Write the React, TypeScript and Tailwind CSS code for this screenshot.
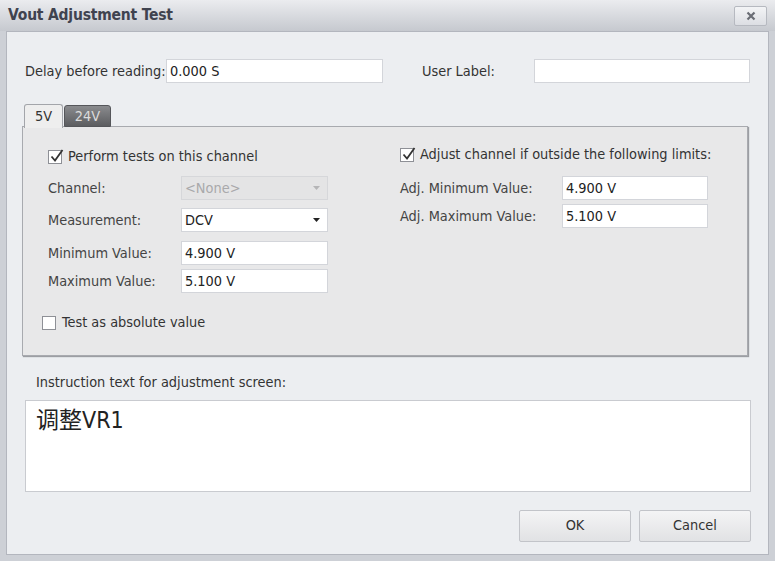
import React from 'react'

const font = { fontFamily: '"DejaVu Sans Condensed", "DejaVu Sans", "Noto Sans CJK SC", sans-serif' }

const inputClass = 'h-[24px] bg-white border border-[#d3d5da] px-[3px] flex items-center text-[14.4px] leading-[17px] text-[#222]'

function Check({ checked }: { checked?: boolean }) {
  return (
    <span className="relative w-[14px] h-[14px] bg-white border border-[#8e9096] shrink-0 inline-block">
      {checked && (
        <svg width="16" height="16" viewBox="0 0 16 16" className="absolute -top-[3px] left-[0px]">
          <path d="M2.5 8.5 L6 12.5 L13.5 2" fill="none" stroke="#333" strokeWidth="1.8" />
        </svg>
      )}
    </span>
  )
}

function Row({ label, children, labelW = 'w-[133px]' }: { label: string; children: React.ReactNode; labelW?: string }) {
  return (
    <div className="flex items-center">
      <span className={`${labelW} text-[14.4px] leading-[17px] text-[#444]`}>{label}</span>
      {children}
    </div>
  )
}

export default function App() {
  return (
    <div className="w-[775px] h-[561px] bg-[#cdd0d6] flex flex-col" style={font}>
      {/* title bar */}
      <div className="h-[31px] bg-gradient-to-b from-[#ebecef] to-[#c6c9cf] flex items-center justify-between pl-[8px] pr-[8px]">
        <span className="text-[15.5px] font-bold text-[#40434f] tracking-[-0.2px]">Vout Adjustment Test</span>
        <div className="w-[33px] h-[20px] mt-[1px] border border-[#b6b9c0] bg-gradient-to-b from-[#f3f4f6] to-[#dcdee3] rounded-[2px] flex items-center justify-center">
          <svg width="10" height="10" viewBox="0 0 10 10">
            <path d="M1.5 1.5 L8.5 8.5 M8.5 1.5 L1.5 8.5" stroke="#6a6d75" strokeWidth="2.2" />
          </svg>
        </div>
      </div>

      <div className="flex-1 ml-[6px] mr-[6px] mb-[6px] border border-[#b3b6be] bg-[#eceef1] flex flex-col">
        {/* delay / user label */}
        <div className="flex items-center mt-[27px] ml-[18px]">
          <span className="w-[141px] text-[14.4px] leading-[17px] text-[#333]">Delay before reading:</span>
          <div className={`${inputClass} w-[217px]`}>0.000 S</div>
          <span className="ml-[39px] w-[112px] text-[14.4px] leading-[17px] text-[#333]">User Label:</span>
          <div className={`${inputClass} w-[216px]`}></div>
        </div>

        {/* tabs */}
        <div className="flex items-end ml-[17px] mt-[20px] h-[24px] relative z-10">
          <div className="w-[39px] h-[24px] bg-[#eeeeee] border border-b-0 border-[#a3a5aa] rounded-t-[3px] flex items-center justify-center text-[14.4px] leading-[17px] text-[#333] -mb-[1px] pb-[1px]">
            5V
          </div>
          <div className="w-[47px] h-[22px] ml-[1px] bg-gradient-to-b from-[#8a8b8e] to-[#5c5d60] border border-[#55565a] rounded-t-[3px] flex items-center justify-center text-[14.4px] leading-[17px] text-[#dcdcdc]">
            24V
          </div>
        </div>

        {/* panel */}
        <div className="ml-[15px] w-[726px] h-[230px] -mt-[1px] bg-[#e8e8e9] border border-[#a8aaaf] shadow-[1px_1px_1px_#9c9ea3] flex">
          <div className="w-[352px] flex flex-col pl-[25px]">
            <div className="flex items-center gap-[6px] mt-[21px] h-[17px]">
              <Check checked />
              <span className="text-[14.4px] leading-[17px] text-[#333]">Perform tests on this channel</span>
            </div>
            <div className="flex flex-col mt-[11px] gap-[8px]">
              <Row label="Channel:">
                <div className="w-[147px] h-[24px] bg-[#e4e4e5] border border-[#d6d7da] px-[3px] flex items-center justify-between text-[14.4px] leading-[17px] text-[#a9a9ab]">
                  <span>&lt;None&gt;</span>
                  <svg width="7" height="4" viewBox="0 0 7 4" className="mr-[4px]"><path d="M0 0 H7 L3.5 4 Z" fill="#b5b5b7" /></svg>
                </div>
              </Row>
              <Row label="Measurement:">
                <div className="w-[147px] h-[24px] bg-white border border-[#d3d5da] px-[3px] flex items-center justify-between text-[14.4px] leading-[17px] text-[#222]">
                  <span>DCV</span>
                  <svg width="7" height="4" viewBox="0 0 7 4" className="mr-[4px]"><path d="M0 0 H7 L3.5 4 Z" fill="#222" /></svg>
                </div>
              </Row>
            </div>
            <div className="flex flex-col mt-[9px] gap-[4px]">
              <Row label="Minimum Value:">
                <div className={`${inputClass} w-[147px]`}>4.900 V</div>
              </Row>
              <Row label="Maximum Value:">
                <div className={`${inputClass} w-[147px]`}>5.100 V</div>
              </Row>
            </div>
            <div className="flex items-center gap-[6px] mt-[21px] h-[17px] -ml-[6px]">
              <Check />
              <span className="text-[14.4px] leading-[17px] text-[#333]">Test as absolute value</span>
            </div>
          </div>

          <div className="flex flex-col pl-[25px]">
            <div className="flex items-center gap-[6px] mt-[19px] h-[17px]">
              <Check checked />
              <span className="text-[14.4px] leading-[17px] text-[#333]">Adjust channel if outside the following limits:</span>
            </div>
            <div className="flex flex-col mt-[13px] gap-[4px]">
              <Row label="Adj. Minimum Value:" labelW="w-[162px]">
                <div className={`${inputClass} w-[146px]`}>4.900 V</div>
              </Row>
              <Row label="Adj. Maximum Value:" labelW="w-[162px]">
                <div className={`${inputClass} w-[146px]`}>5.100 V</div>
              </Row>
            </div>
          </div>
        </div>

        {/* instruction */}
        <div className="ml-[29px] mt-[16px] text-[14.4px] leading-[20px] text-[#333]">Instruction text for adjustment screen:</div>
        <div className="ml-[18px] mt-[8px] w-[726px] h-[92px] bg-white border border-[#c9cbd0] px-[10px] pt-[5px] text-[23px] leading-[28px] text-[#222]">
          调整VR1
        </div>

        {/* buttons */}
        <div className="flex justify-end gap-[8px] mr-[17px] mt-[18px]">
          <button className="w-[112px] h-[32px] border border-[#c2c4c9] rounded-[2px] bg-gradient-to-b from-[#f4f4f5] to-[#e1e2e4] text-[14.4px] text-[#333]">OK</button>
          <button className="w-[112px] h-[32px] border border-[#c2c4c9] rounded-[2px] bg-gradient-to-b from-[#f4f4f5] to-[#e1e2e4] text-[14.4px] text-[#333]">Cancel</button>
        </div>
      </div>
    </div>
  )
}
